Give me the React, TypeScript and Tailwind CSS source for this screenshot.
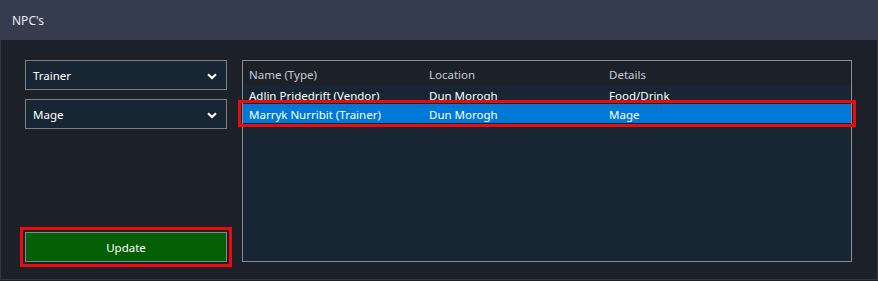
const columns = ["Name (Type)", "Location", "Details"];

const rows = [
  { name: "Adlin Pridedrift (Vendor)", location: "Dun Morogh", details: "Food/Drink", selected: false },
  { name: "Marryk Nurribit (Trainer)", location: "Dun Morogh", details: "Mage", selected: true },
];

const Chevron = () => (
  <svg width="10" height="7" viewBox="0 0 10 7" className="shrink-0">
    <path d="M1 1.2 L5 5 L9 1.2" fill="none" stroke="#ffffff" strokeWidth="2" />
  </svg>
);

const Select = ({ value }: { value: string }) => (
  <div className="flex h-[30px] w-[202px] items-center justify-between border border-[#7b7f86] bg-[#182634] pl-[7px] pr-[9px] pt-[2px] text-white">
    <span>{value}</span>
    <Chevron />
  </div>
);

const App = () => {
  return (
    <div className="h-[281px] w-[878px] bg-[#1c2029] text-[11.5px] leading-none" style={{ fontFamily: '"Noto Sans", "Open Sans", sans-serif' }}>
      <header className="flex h-10 items-center bg-[#353c4e] px-3 pt-[1px] text-[12px] text-[#e8eaee]">NPC's</header>
      <section className="flex h-[240px] gap-[15px] border-x border-b border-[#30374a] pb-[17px] pl-6 pr-[25px] pt-5">
        <div className="flex w-[202px] flex-col">
          <div className="flex flex-col gap-[9px]">
            <Select value="Trainer" />
            <Select value="Mage" />
          </div>
          <button className="mt-auto h-[30px] w-[202px] border border-[#85898f] bg-[#056005] pt-[1px] text-white outline-[3px] outline-offset-2 outline-[#ee0a0a]">
            Update
          </button>
        </div>
        <div className="flex-1 border border-[#898e96] bg-[#182634]">
          <div className="grid h-6 grid-cols-[180px_180px_1fr] items-center bg-[#1c2029] px-[6px] pt-[3px] text-[#c9ccd2]">
            {columns.map((c) => (
              <span key={c}>{c}</span>
            ))}
          </div>
          {rows.map((r) => (
            <div
              key={r.name}
              className={`relative grid h-[19px] grid-cols-[180px_180px_1fr] items-center px-[6px] pt-[2px] text-white ${r.selected ? "bg-[#0078d7]" : ""}`}
            >
              <span>{r.name}</span>
              <span>{r.location}</span>
              <span>{r.details}</span>
              {r.selected && (
                <span className="pointer-events-none absolute -bottom-[4px] -left-[5px] -right-[5px] -top-[4px] border-[3px] border-[#ee0a0a]" />
              )}
            </div>
          ))}
        </div>
      </section>
    </div>
  );
};

export default App;
